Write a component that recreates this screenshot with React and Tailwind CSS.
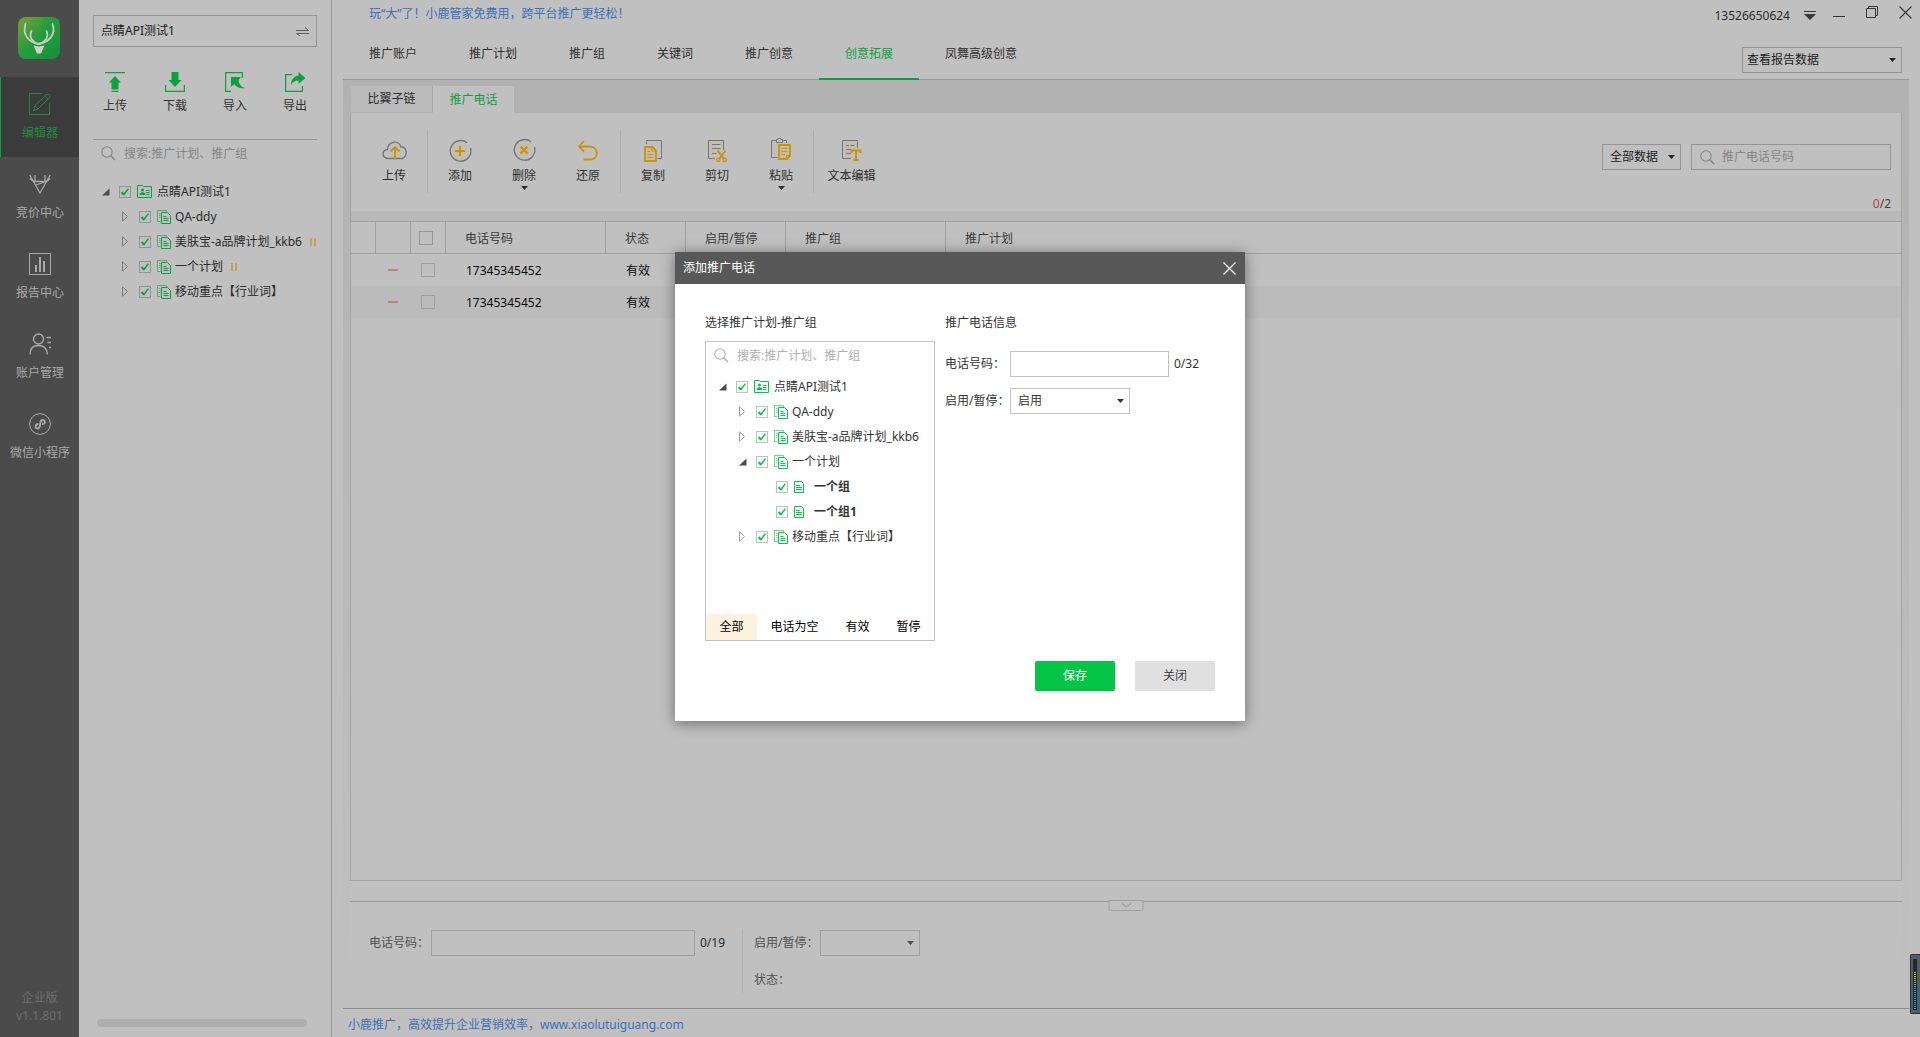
import React from "react";

function Caret({ className = "" }) {
  return (
    <svg className={className} width="7" height="4" viewBox="0 0 7 4" fill="currentColor" aria-hidden="true">
      <path d="M0 0H7L3.5 4Z" />
    </svg>
  );
}

function SearchIcon() {
  return (
    <svg width="15" height="15" viewBox="0 0 15 15" fill="none" stroke="currentColor" aria-hidden="true" className="shrink-0">
      <circle cx="6" cy="6" r="5.2" strokeWidth="1.1" />
      <path d="M9.8 9.8L14 14" strokeWidth="1.6" />
    </svg>
  );
}

function CloseIcon() {
  return (
    <svg width="13" height="13" viewBox="0 0 13 13" fill="none" stroke="currentColor" strokeWidth="1.2" aria-hidden="true">
      <path d="M0.5 0.5L12.5 12.5M12.5 0.5L0.5 12.5" />
    </svg>
  );
}

function CheckBox({ label, checked = false, className, tick }) {
  return (
    <span className="relative block shrink-0">
      <input type="checkbox" defaultChecked={checked} aria-label={label} className={`block appearance-none border bg-transparent ${className}`} />
      {checked && (
        <svg className={`pointer-events-none absolute inset-0 ${tick}`} width="12" height="12" viewBox="0 0 12 12" fill="none" stroke="currentColor" aria-hidden="true">
          <path d="M2.6 6L5 8.8" strokeWidth="2" />
          <path d="M4.6 9L9.4 2.6" strokeWidth="1.5" />
        </svg>
      )}
    </span>
  );
}

function SelectBox({ id, label, value, className, pad = "pl-[7px]" }) {
  return (
    <span className={`relative block shrink-0 ${className}`}>
      <select id={id} aria-label={label} className={`block size-full appearance-none border border-inherit bg-transparent leading-[16px] outline-none ${pad}`}>
        <option>{value}</option>
      </select>
      <Caret className="pointer-events-none absolute top-[11px] right-[6px]" />
    </span>
  );
}

/* ---------- tree ---------- */

function AccountIcon() {
  return (
    <svg width="15" height="13" viewBox="0 0 15 13" fill="none" stroke="currentColor" aria-hidden="true">
      <path d="M0.5 12.5V0.5H5.5L6.5 1.5H14.5V12.5Z" />
      <path d="M9 5.5H12.5M9 7.5H12.5M9 9.5H12.5" />
      <circle cx="5.5" cy="5" r="1.5" fill="currentColor" stroke="none" />
      <path d="M2.8 10V8.2L5.5 7L8.2 8.2V10Z" fill="currentColor" stroke="none" />
    </svg>
  );
}

function PlanIcon() {
  return (
    <svg width="14" height="14" viewBox="0 0 14 14" fill="none" stroke="currentColor" aria-hidden="true">
      <path d="M3.5 11.5H0.5V0.5H9.5V2.5M2 3.5H3.5M2 5.5H3.5M2 7.5H3.5" opacity="0.6" />
      <path d="M4.5 2.5H10.5L13.5 5.5V13.5H4.5Z" />
      <path d="M6.5 6.5H9.5M6.5 8.5H11.5M6.5 10.5H11.5" />
    </svg>
  );
}

function GroupIcon() {
  return (
    <svg width="10" height="12" viewBox="0 0 10 12" fill="none" stroke="currentColor" aria-hidden="true">
      <path d="M0.5 0.5H7.5L9.5 2.5V11.5H0.5Z" />
      <path d="M2 4.5H6M2 6.5H8M2 8.5H8" />
    </svg>
  );
}

const indents = ["pl-0", "pl-[20px]", "pl-[40px]"];
const icons = {
  account: { icon: <AccountIcon />, slot: "w-[20px]" },
  plan: { icon: <PlanIcon />, slot: "w-[18px]" },
  group: { icon: <GroupIcon />, slot: "w-[20px]" },
};

function Tree({ rows, text, green, box, arrow, className }) {
  return (
    <ul className={`overflow-hidden ${className}`}>
      {rows.map((r) => (
        <li key={r.name} className={`flex h-[25px] items-center whitespace-nowrap ${indents[r.depth]} ${text}`}>
          {r.kind === "group" ? (
            <span className="w-[17px] shrink-0" />
          ) : (
            <button type="button" aria-label={(r.open ? "收起 " : "展开 ") + r.name} className={`w-[17px] shrink-0 ${arrow}`}>
              {r.open ? (
                <svg width="8" height="8" viewBox="0 0 8 8" aria-hidden="true"><path d="M7.5 0.5V7.5H0Z" className="fill-[#4d4d4d]" /></svg>
              ) : (
                <svg width="7" height="11" viewBox="0 0 7 11" fill="none" stroke="currentColor" aria-hidden="true"><path d="M0.5 0.8V10.2L5.5 5.5Z" /></svg>
              )}
            </button>
          )}
          <CheckBox label={r.name} checked className={`size-[12px] ${box}`} tick={green} />
          <span className={`ml-[6px] shrink-0 ${icons[r.kind].slot} ${green}`}>{icons[r.kind].icon}</span>
          <span className={r.kind === "group" ? "font-bold" : ""}>{r.name}</span>
          {r.paused && (
            <svg className="ml-[8px] shrink-0 text-[#c99f58]" width="6" height="8" viewBox="0 0 6 8" fill="currentColor" aria-hidden="true">
              <path d="M0 0H2V8H0ZM4 0H6V8H4Z" />
            </svg>
          )}
        </li>
      ))}
    </ul>
  );
}

const sideRows = [
  { name: "点睛API测试1", kind: "account", depth: 0, open: true },
  { name: "QA-ddy", kind: "plan", depth: 1 },
  { name: "美肤宝-a品牌计划_kkb6", kind: "plan", depth: 1, paused: true },
  { name: "一个计划", kind: "plan", depth: 1, paused: true },
  { name: "移动重点【行业词】", kind: "plan", depth: 1 },
];

const dialogRows = [
  { name: "点睛API测试1", kind: "account", depth: 0, open: true },
  { name: "QA-ddy", kind: "plan", depth: 1 },
  { name: "美肤宝-a品牌计划_kkb6", kind: "plan", depth: 1 },
  { name: "一个计划", kind: "plan", depth: 1, open: true },
  { name: "一个组", kind: "group", depth: 2 },
  { name: "一个组1", kind: "group", depth: 2 },
  { name: "移动重点【行业词】", kind: "plan", depth: 1 },
];

/* ---------- navigation rail ---------- */

function Logo() {
  return (
    <svg width="42" height="42" viewBox="0 0 42 42" fill="none" aria-label="小鹿推广" role="img">
      <defs>
        <linearGradient id="logoFill" x1="0" y1="0" x2="1" y2="1">
          <stop offset="0" stopColor="#7fa03a" />
          <stop offset="0.45" stopColor="#2e9a3c" />
          <stop offset="1" stopColor="#128f3a" />
        </linearGradient>
      </defs>
      <rect width="42" height="42" rx="8" fill="url(#logoFill)" />
      <path d="M26 0H34Q42 0 42 8V28Q24 34 15 42H8Q0 42 0 34V32Q22 26 26 0Z" fill="#18a040" opacity="0.35" />
      <g stroke="#c6ccc6" strokeLinecap="round" strokeWidth="1.8">
        <path d="M7.5 7C4.5 16 9 25 20.5 27C32.5 25 38 16 34.500 7" />
        <path d="M13.500 14C10.500 20 14.500 25.500 20.500 27C27 25.500 31.500 20 28.500 14" />
      </g>
      <path d="M15.500 28.500L21 29.500L26.500 28.500L23 36.500H19Z" fill="#d0d2d0" />
    </svg>
  );
}

const railItems = [
  {
    label: "编辑器",
    icon: (
      <>
        <path d="M13 0.5H0.5V21.5H20.5V10" />
        <path d="M4.5 17.5L6 12.500L17.500 1.500Q19 0.5 20.500 1.800Q21.800 3.200 20.500 4.500L9 16Z M16 3L19 6M6 12.500L9 16" />
      </>
    ),
  },
  {
    label: "竞价中心",
    icon: <path strokeWidth="1.3" d="M0.8 2L11 20L21.2 2M4.5 8.5H17.5M6 2V8.5M16 2V8.5M0.8 5.5L4.5 8.5M21.2 5.5L17.5 8.5M7 12L17 8.5" />,
  },
  {
    label: "报告中心",
    icon: (
      <>
        <rect x="0.5" y="0.5" width="21" height="21" />
        <path strokeWidth="2" d="M7 12V19M11 4V19M15 8V19" />
      </>
    ),
  },
  {
    label: "账户管理",
    icon: (
      <>
        <circle cx="9.5" cy="6" r="5" strokeWidth="1.4" />
        <path strokeWidth="1.4" d="M1 21.5C1 15 5 12.5 9.5 12.5S18 15 18.5 21.5M17.5 4.5H22M18.5 9.5H22M20 14.5H22" />
      </>
    ),
  },
  {
    label: "微信小程序",
    icon: (
      <>
        <circle cx="11" cy="11" r="10.4" />
        <path strokeWidth="1.8" d="M9.5 11C6 11 5.5 15.5 8.5 15.5C13 15.5 9.5 7 13.5 7C17 7 16.5 11.5 13 11" />
      </>
    ),
  },
];

function Rail() {
  return (
    <nav aria-label="主导航" className="flex w-[79px] shrink-0 flex-col bg-[#4b4b4b] text-[#a9a9a9]">
      <div className="h-[77px] shrink-0 pt-[17px] pl-[18px]"><Logo /></div>
      {railItems.map((it, i) => (
        <button
          key={it.label}
          type="button"
          className={`flex h-[80px] shrink-0 flex-col items-center gap-[10px] border-l pt-[16px] ${i === 0 ? "border-[#109f3f] bg-[#3b3b3b] text-[#24893f]" : "border-transparent"}`}
        >
          <svg width="22" height="22" viewBox="0 0 22 22" fill="none" stroke="currentColor" aria-hidden="true">{it.icon}</svg>
          <span>{it.label}</span>
        </button>
      ))}
      <div className="mt-auto pb-[12px] text-center leading-[18px] text-[#6f6f6f]">
        <p>企业版</p>
        <p>v1.1.801</p>
      </div>
    </nav>
  );
}

/* ---------- account panel ---------- */

const transfers = [
  { label: "上传", icon: <path d="M0 0H20V1.2H0ZM10 4L16 10.5H13.5V17.5H6.5V10.5H4ZM6.5 18.8H13.5V20H6.5Z" /> },
  { label: "下载", icon: <path d="M6.5 0H13.5V8H16.5L10 15L3.5 8H6.5ZM0 13H1.2V18.8H18.8V13H20V20H0Z" /> },
  { label: "导入", icon: <path d="M0 0H18V6H16.8V1.2H1.2V18.8H6V20H0ZM6 5H16L13.5 8C14 12.5 16.5 15 20 16C15 17 11 15 9.5 12L6 15Z" /> },
  { label: "导出", icon: <path d="M0 2H7V3.2H1.2V18.8H16.8V14H18V20H0ZM13.5 0L20.5 6L13.5 12V8.5C10 8.5 7.5 10 6 13C6 7.5 9 4 13.5 3.5Z" /> },
];

function AccountPanel() {
  return (
    <aside className="flex w-[253px] shrink-0 flex-col border-r border-[#949494] px-[14px] pt-[15px]">
      <button type="button" className="flex h-[32px] shrink-0 items-center justify-between border border-[#949494] px-[7px] text-[#1c1c1c]">
        <span>点睛API测试1</span>
        <svg width="13" height="9" viewBox="0 0 13 9" fill="none" stroke="#5c5c5c" aria-hidden="true">
          <path d="M0 3.5H12.5L9 0.5M13 6.5H0.5L4 9" />
        </svg>
      </button>
      <div className="-mx-[8px] mt-[25px] flex shrink-0 justify-between">
        {transfers.map((t) => (
          <button key={t.label} type="button" className="flex w-[60px] flex-col items-center gap-[6px] text-[#333]">
            <svg className="text-[#109f3f]" width="20" height="20" viewBox="0 0 20 20" fill="currentColor" overflow="visible" aria-hidden="true">{t.icon}</svg>
            <span>{t.label}</span>
          </button>
        ))}
      </div>
      <label className="mt-[25px] flex h-[28px] shrink-0 items-center gap-[8px] border-t border-[#949494] pl-[8px] text-[#858585]">
        <SearchIcon />
        <input aria-label="搜索" placeholder="搜索:推广计划、推广组" className="min-w-0 flex-1 bg-transparent outline-none placeholder:text-[#858585]" />
      </label>
      <Tree rows={sideRows} className="mt-[12px] pl-[9px]" text="text-[#2a2a2a]" green="text-[#109f3f]" box="border-[#949494]" arrow="text-[#7b7b7b]" />
      <div className="mx-[4px] mt-auto mb-[10px] h-[8px] rounded-full bg-[#aeaeae] mr-[10px]" />
    </aside>
  );
}

/* ---------- header ---------- */

const mainTabs = ["推广账户", "推广计划", "推广组", "关键词", "推广创意", "创意拓展", "凤舞高级创意"];

function Header() {
  return (
    <header className="flex h-[80px] shrink-0 justify-between pl-[11px]">
      <div className="flex min-w-0 flex-1 flex-col justify-between">
        <a href="#promo" className="mt-[6px] ml-[26px] self-start text-[#3c70b8]">玩“大”了！小鹿管家免费用，跨平台推广更轻松！</a>
        <nav aria-label="推广" className="flex">
          {mainTabs.map((t) => (
            <a
              key={t}
              href="#tab"
              className={`h-[34px] px-[26px] whitespace-nowrap ${t === "创意拓展" ? "border-b-2 border-[#109f3f] text-[#109f3f]" : "border-b border-[#9a9a9a] text-[#2f2f2f]"}`}
            >
              {t}
            </a>
          ))}
          <span className="flex-1 border-b border-[#9a9a9a]" />
        </nav>
      </div>
      <div className="flex shrink-0 flex-col">
        <div className="mr-[8px] flex h-[30px] justify-end text-[#3a3a3a]">
          <span className="mt-[8px] text-[#2b2b2b]">13526650624</span>
          <button type="button" aria-label="菜单" className="mt-[10px] ml-[14px] self-start">
            <svg width="12" height="10" viewBox="0 0 12 10" fill="currentColor" aria-hidden="true"><path d="M0 1H12V2H0ZM0 4H12L6 10Z" /></svg>
          </button>
          <button type="button" aria-label="最小化" className="mt-[16px] ml-[17px] h-px w-[12px] self-start bg-[#333]" />
          <button type="button" aria-label="还原窗口" className="mt-[6px] ml-[21px] self-start">
            <svg width="12" height="12" viewBox="0 0 12 12" fill="none" stroke="currentColor" aria-hidden="true"><path d="M0.5 2.5H9.5V11.5H0.5ZM2.5 2.5V0.5H11.5V9.5H9.5" /></svg>
          </button>
          <button type="button" aria-label="关闭窗口" className="mt-[6px] ml-[21px] self-start"><CloseIcon /></button>
        </div>
        <div className="mr-[11px] flex flex-1 justify-end border-b border-[#9a9a9a] pt-[17px] pr-[7px]">
          <SelectBox label="查看报告数据" value="查看报告数据" className="h-[26px] w-[160px] border-[#949494] text-[#222]" pad="pl-[4px]" />
        </div>
      </div>
    </header>
  );
}

/* ---------- toolbar ---------- */

const gold = "#c9920f";
const gray = "#74767a";
const cream = "#c6bda6";

const tools = [
  {
    label: "上传", first: true,
    icon: (
      <>
        <path d="M8 17L13 10L20 11V18H8Z" fill={cream} opacity="0.7" />
        <path d="M17 19.5H6C-1 19 0 10.5 5.5 10.5C6 2 17 0.5 19 8C25 7.5 26 17 20.5 19.5H17" stroke={gray} strokeWidth="1.4" />
        <path d="M13 20V9M8.5 12.5L13 8L17.5 12.5" stroke={gold} strokeWidth="1.8" />
      </>
    ),
  },
  {
    label: "添加", sep: true,
    icon: (
      <>
        <circle cx="12" cy="12" r="8" fill={cream} opacity="0.7" />
        <path d="M19 3.8A10.3 10.3 0 1 0 22.5 9" stroke={gray} strokeWidth="1.4" />
        <path d="M12 7V17M7 12H17" stroke={gold} strokeWidth="2" />
      </>
    ),
  },
  {
    label: "删除", menu: true,
    icon: (
      <>
        <circle cx="12" cy="11" r="8" fill={cream} opacity="0.7" />
        <path d="M19 2.8A10.3 10.3 0 1 0 22.5 8" stroke={gray} strokeWidth="1.4" />
        <path d="M8.5 7.5L15.5 14.5M15.5 7.5L8.5 14.5" stroke={gold} strokeWidth="2.4" />
      </>
    ),
  },
  {
    label: "还原",
    icon: (
      <>
        <rect x="7" y="10" width="10" height="9" fill={cream} opacity="0.5" />
        <path d="M8 2L3 7.5L8 12.5M3.5 7.500H14C23 8 23 20.500 14 20.500H7.500" stroke={gold} strokeWidth="1.8" />
      </>
    ),
  },
  {
    label: "复制", sep: true,
    icon: (
      <>
        <path d="M5.5 5V1.5H20.5V19.5H16.5" stroke={gray} />
        <path d="M4 8H11.5L15 11.5V22H4Z" fill={cream} stroke={gold} strokeWidth="1.8" />
        <path d="M11 8V12H15M6.5 12.5H9M6.5 15.5H12M6.5 18.5H12" stroke={gold} />
      </>
    ),
  },
  {
    label: "剪切",
    icon: (
      <>
        <path d="M10 19.5H3.5V1.5H18.5V11" stroke={gray} fill={cream} fillOpacity="0.6" />
        <path d="M7 5.5H15.5M7 9.5H15.5M7 14.5H11.5" stroke={gray} />
        <path d="M12.5 11.5L19 20M20.5 11.5L14 20" stroke={gold} strokeWidth="1.8" />
        <circle cx="13.3" cy="20.8" r="1.7" stroke={gold} strokeWidth="1.3" />
        <circle cx="19.7" cy="20.8" r="1.7" stroke={gold} strokeWidth="1.3" />
      </>
    ),
  },
  {
    label: "粘贴", menu: true,
    icon: (
      <>
        <path d="M8.5 18.5H2.5V1.5H7.5M13.5 1.5H17.5V4" stroke={gray} fill={cream} fillOpacity="0.5" />
        <path d="M7.5 0.5V3.5H13.5V0.5H12V-0.5H9V0.5H7.5" stroke={gray} />
        <path d="M10 6H21V17L18 20H10Z" fill={cream} stroke={gold} strokeWidth="1.8" />
        <path d="M21 16.5H17.5V20M12.5 9.5H18.5M12.5 12.5H18.5M12.5 15.5H16" stroke={gold} />
      </>
    ),
  },
  {
    label: "文本编辑", sep: true, wide: true,
    icon: (
      <>
        <path d="M11 19.5H2.5V1.5H17.5V9" stroke={gray} fill={cream} fillOpacity="0.6" />
        <path d="M6 6.5H9M10.5 6.5H14.5M6 10.5H11M6 14.5H11" stroke={gray} />
        <path d="M11.5 14V11.5H20.5V14M16 12V21M13.5 21H18.5" stroke={gold} strokeWidth="2" />
      </>
    ),
  },
];

function Toolbar() {
  return (
    <div className="flex h-[98px] shrink-0 justify-between px-[10px]">
      <div className="flex pt-[17px]">
        {tools.map((t) => (
          <button
            key={t.label}
            type="button"
            className={`flex h-[63px] flex-col items-center pt-[9px] text-[#2f2f2f] ${t.sep ? "border-l border-[#aeaeae]" : ""} ${t.wide ? "w-[76px]" : t.first ? "w-[66px]" : t.sep ? "w-[65px]" : "w-[64px]"}`}
          >
            <svg width="24" height="24" viewBox="0 0 24 24" fill="none" overflow="visible" aria-hidden="true">{t.icon}</svg>
            <span className="mt-[5px] whitespace-nowrap">{t.label}</span>
            {t.menu && <Caret className="mt-[2px] shrink-0" />}
          </button>
        ))}
      </div>
      <div className="flex flex-col items-end pt-[31px]">
        <div className="flex gap-[10px]">
          <SelectBox label="数据范围" value="全部数据" className="h-[26px] w-[79px] border-[#949494] text-[#222]" />
          <label className="flex h-[26px] w-[200px] items-center gap-[7px] border border-[#949494] pl-[8px] text-[#858585]">
            <SearchIcon />
            <input aria-label="推广电话号码" placeholder="推广电话号码" className="min-w-0 flex-1 bg-transparent outline-none placeholder:text-[#858585]" />
          </label>
        </div>
        <p className="mt-[26px] text-[#444]"><span className="text-[#b04a3e]">0</span>/2</p>
      </div>
    </div>
  );
}

/* ---------- table ---------- */

const columns = [
  ["电话号码", "w-[160px]"],
  ["状态", "w-[80px]"],
  ["启用/暂停", "w-[100px]"],
  ["推广组", "w-[160px]"],
  ["推广计划", ""],
];

function PhoneTable() {
  return (
    <table className="w-full table-fixed border-separate border-spacing-0 text-left">
      <thead>
        <tr className="h-[32px] text-[#3a3a3a]">
          <th className="w-[25px] border-r border-b border-[#a0a0a0]" />
          <th className="w-[35px] border-r border-b border-[#a0a0a0]" />
          <th className="w-[35px] border-r border-b border-[#a0a0a0] pl-[8px]"><CheckBox label="全选" className="size-[14px] border-[#949494]" /></th>
          {columns.map(([name, w], i) => (
            <th key={name} className={`border-b border-[#a0a0a0] pt-[2px] pl-[19px] font-normal ${w} ${i < 4 ? "border-r" : ""}`}>{name}</th>
          ))}
        </tr>
      </thead>
      <tbody>
        {[1, 2].map((n) => (
          <tr key={n} className={`h-[32px] text-[#0c0c0c] ${n === 2 ? "bg-[#bbbbbb]" : ""}`}>
            <td />
            <td className="pl-[12px]"><span className="block h-[2px] w-[10px] bg-[#c47f7f]" /></td>
            <td className="pl-[10px]"><CheckBox label={`选择第${n}行`} className="size-[14px] border-[#a0a0a0]" /></td>
            <td className="pt-[2px] pl-[20px]">17345345452</td>
            <td className="pt-[2px] pl-[20px]">有效</td>
            <td />
            <td />
            <td />
          </tr>
        ))}
      </tbody>
    </table>
  );
}

/* ---------- detail strip ---------- */

function DetailStrip() {
  return (
    <section className="relative flex h-[107px] shrink-0 border-t border-[#9a9a9a] bg-[#c0c0c0] pt-[28px] pl-[19px] text-[#505050]">
      <button type="button" aria-label="收起" className="absolute -top-[2px] left-1/2 flex h-[11px] w-[35px] -translate-x-1/2 items-center justify-center rounded-b-xs border border-[#a0a0a0] bg-[#c0c0c0]">
        <svg width="10" height="5" viewBox="0 0 10 5" fill="none" stroke="#909090" aria-hidden="true"><path d="M0.5 0.5L5 4L9.5 0.5" /></svg>
      </button>
      <div className="flex h-[26px] items-center">
        <label htmlFor="detail-phone" className="w-[62px] whitespace-nowrap">电话号码：</label>
        <input id="detail-phone" className="h-[26px] w-[264px] border border-[#a0a0a0] px-[8px] outline-none" />
        <span className="ml-[5px] w-[42px] text-[#2a2a2a]">0/19</span>
      </div>
      <div className="flex h-[63px] flex-col gap-[16px] border-l border-[#b2b2b2] pl-[11px]">
        <div className="flex h-[26px] items-center">
          <label htmlFor="detail-state" className="w-[66px] whitespace-nowrap">启用/暂停：</label>
          <SelectBox id="detail-state" value="" className="h-[26px] w-[100px] border-[#a0a0a0]" />
        </div>
        <p>状态：</p>
      </div>
    </section>
  );
}

/* ---------- dialog ---------- */

function AddPhoneDialog() {
  return (
    <div role="dialog" aria-modal="true" aria-label="添加推广电话" className="flex w-[570px] flex-col bg-white text-[#333] shadow-[0_2px_14px_rgba(0,0,0,0.45)]">
      <div className="flex h-[32px] items-center justify-between bg-[#585858] pr-[9px] pl-[8px] text-white">
        <h2>添加推广电话</h2>
        <button type="button" aria-label="关闭对话框"><CloseIcon /></button>
      </div>
      <div className="flex gap-[10px] px-[30px] pt-[31px]">
        <div className="w-[230px] shrink-0">
          <h3>选择推广计划-推广组</h3>
          <div className="mt-[10px] flex h-[300px] flex-col border border-[#c0c0c0]">
            <label className="flex h-[27px] shrink-0 items-center gap-[8px] pl-[8px] text-[#b0b0b0]">
              <SearchIcon />
              <input aria-label="搜索计划或组" placeholder="搜索:推广计划、推广组" className="min-w-0 flex-1 outline-none placeholder:text-[#b0b0b0]" />
            </label>
            <Tree rows={dialogRows} className="mt-[5px] pl-[13px]" text="text-[#333]" green="text-[#06c445]" box="border-[#c0c0c0]" arrow="text-[#a0a0a0]" />
            <div className="mt-auto flex text-black">
              {["全部", "电话为空", "有效", "暂停"].map((f, i) => (
                <button key={f} type="button" className={`h-[26px] grow px-[13px] ${i === 0 ? "bg-[#fdf2df]" : ""}`}>{f}</button>
              ))}
            </div>
          </div>
        </div>
        <div className="min-w-0 flex-1">
          <h3>推广电话信息</h3>
          <div className="mt-[20px] flex items-center">
            <label htmlFor="new-phone" className="w-[65px] shrink-0 whitespace-nowrap">电话号码：</label>
            <input id="new-phone" className="h-[26px] w-[159px] border border-[#c0c0c0] px-[8px] outline-none" />
            <span className="ml-[5px]">0/32</span>
          </div>
          <div className="mt-[11px] flex items-center">
            <label htmlFor="new-state" className="w-[65px] shrink-0 whitespace-nowrap">启用/暂停：</label>
            <SelectBox id="new-state" value="启用" className="h-[26px] w-[120px] border-[#c0c0c0]" />
          </div>
        </div>
      </div>
      <div className="flex justify-end gap-[20px] px-[30px] pt-[20px] pb-[30px]">
        <button type="button" className="h-[30px] w-[80px] rounded-xs bg-[#06c445] text-white">保存</button>
        <button type="button" className="h-[30px] w-[80px] rounded-xs bg-[#e0e0e0] text-[#444]">关闭</button>
      </div>
    </div>
  );
}

function LevelMeter() {
  const colors = [
    ...Array(6).fill("#2c3238"),
    "#e8c416", "#e8c416", "#d6cf2a", "#b9d03c", "#9bd04c", "#86cf60",
    ...Array(2).fill("#4cc0a8"),
    ...Array(11).fill("#28a8ea"),
  ];
  return (
    <svg className="absolute right-0 bottom-[23px]" width="10" height="60" viewBox="0 0 10 60" aria-hidden="true">
      <rect width="12" height="60" rx="1.5" fill="#2b3036" />
      <rect x="1" y="1" width="10" height="58" fill="#4f5f68" />
      <rect x="3" y="5" width="4" height="51" fill="#1f252b" />
      {colors.map((c, i) => (
        <rect key={i} x="4" y={6 + i * 2} width="2" height="1" fill={c} />
      ))}
    </svg>
  );
}

export default function App() {
  return (
    <div lang="zh-CN" className="relative flex h-screen overflow-hidden bg-[#c0c0c0] font-['Noto_Sans','Noto_Sans_CJK_SC',sans-serif] text-[12px] leading-[16px] [&_button]:cursor-pointer">
      <Rail />
      <AccountPanel />
      <div className="flex min-w-0 flex-1 flex-col">
        <Header />
        <main className="mx-[11px] flex min-h-0 flex-1 flex-col bg-linear-to-b from-[#b2b2b2] to-[#c0c0c0] px-[7px] pt-[6px]">
          <div className="flex h-[27px] shrink-0 pl-px">
            <a href="#sublink" className="flex h-[26px] w-[82px] items-center justify-center border-r border-[#a6a6a6] bg-[#bababa] text-[#2f2f2f]">比翼子链</a>
            <a href="#phone" className="flex h-[27px] w-[81px] items-center justify-center bg-[#c0c0c0] text-[#109f3f]">推广电话</a>
          </div>
          <div className="flex min-h-0 flex-1 flex-col border-x border-b border-[#a3a3a3] bg-[#c0c0c0]">
            <Toolbar />
            <div className="h-[11px] shrink-0 border-b border-[#a0a0a0] bg-[#b9b9b9]" />
            <PhoneTable />
          </div>
          <div className="h-[20px] shrink-0 bg-[#c0c0c0]" />
          <DetailStrip />
        </main>
        <footer className="mx-[11px] flex h-[29px] shrink-0 items-center border-t border-[#8f8f8f] pt-[4px] pl-[5px]">
          <a href="#home" className="text-[#3c70b8]">小鹿推广，高效提升企业营销效率，www.xiaolutuiguang.com</a>
        </footer>
      </div>
      <div className="absolute inset-0 flex items-center justify-center pb-[64px]">
        <AddPhoneDialog />
      </div>
      <LevelMeter />
    </div>
  );
}
